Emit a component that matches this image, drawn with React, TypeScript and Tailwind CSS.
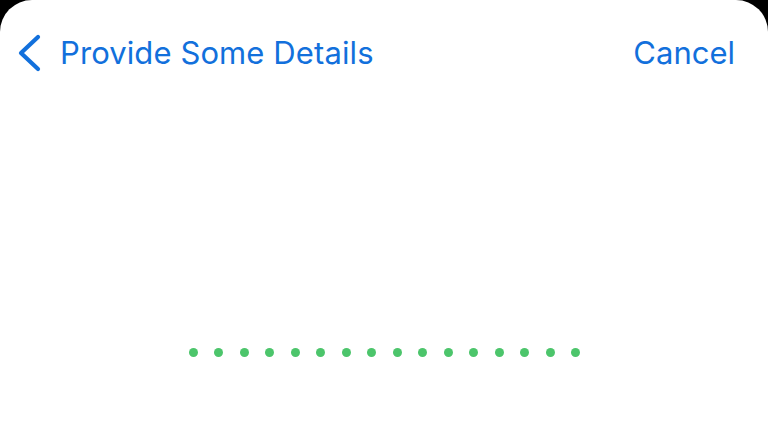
import React from "react";

export default function App() {
  const dots = Array.from({ length: 16 });
  return (
    <div className="w-[768px] h-[432px] bg-black overflow-hidden">
      <div className="w-full h-full bg-white rounded-t-[32px] flex flex-col" style={{ fontFamily: "Inter, 'Noto Sans', sans-serif" }}>
        <div className="flex items-center justify-between pl-[16px] pr-[33px] pt-[33px] h-[72px]">
          <div className="flex items-center">
            <svg width="27" height="38" viewBox="0 0 27 38" className="mr-[17px]">
              <path d="M22 3 L5 19 L22 35" fill="none" stroke="#1270dc" strokeWidth="4.2" strokeLinecap="round" strokeLinejoin="round" />
            </svg>
            <span className="text-[31px] leading-none text-[#1270dc] tracking-[0.1px]">Provide Some Details</span>
          </div>
          <span className="text-[31px] leading-none text-[#1270dc]">Cancel</span>
        </div>
        <div className="flex-1 flex items-start justify-center pt-[276px]">
          <div className="flex gap-[16.5px] ml-[1px]">
            {dots.map((_, i) => (
              <div key={i} className="w-[9px] h-[9px] rounded-full bg-[#4cc56b]" />
            ))}
          </div>
        </div>
      </div>
    </div>
  );
}
